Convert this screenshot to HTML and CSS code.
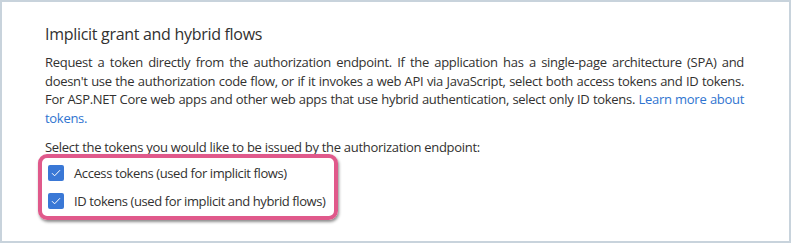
FILE: index.html
```html
<!doctype html>
<html>
<head>
<meta charset="utf-8">
<title>Implicit grant and hybrid flows</title>
<link rel="stylesheet" href="styles.css">
</head>
<body>
<div class="frame">
  <div class="section">
    <h3 class="title">Implicit grant and hybrid flows</h3>
    <p class="desc">Request a token directly from the authorization endpoint. If the application has a single-page architecture (SPA) and doesn't use the authorization code flow, or if it invokes a web API via JavaScript, select both access tokens and ID tokens. For ASP.NET Core web apps and other web apps that use hybrid authentication, select only ID tokens. <a href="#">Learn more about tokens.</a></p>
    <p class="ask">Select the tokens you would like to be issued by the authorization endpoint:</p>
    <div class="picks">
      <label class="pick"><span class="box"><svg width="10" height="8" viewBox="0 0 10 8"><path d="M1 4.2l2.6 2.6L9 1.2" fill="none" stroke="#fff" stroke-width="1"/></svg></span>Access tokens (used for implicit flows)</label>
      <label class="pick"><span class="box"><svg width="10" height="8" viewBox="0 0 10 8"><path d="M1 4.2l2.6 2.6L9 1.2" fill="none" stroke="#fff" stroke-width="1"/></svg></span>ID tokens (used for implicit and hybrid flows)</label>
    </div>
  </div>
</div>
</body>
</html>
```

FILE: styles.css
```css
*{margin:0;padding:0;box-sizing:border-box}
html,body{width:791px;height:243px;background:#fff}
body{font-family:"Segoe UI","Open Sans","Liberation Sans",sans-serif;color:#323130;overflow:hidden;letter-spacing:-0.3px}
.frame{width:791px;height:243px;border:2px solid #c8d3dc;background:#fff}
.section{padding:21px 45px 0 43px}
.title{font-size:16px;font-weight:400;line-height:22px;margin-bottom:8px}
.desc{font-size:13px;line-height:18.5px;text-align:justify}
.desc a{color:#2f74d0;text-decoration:none}
.ask{font-size:13px;line-height:18px;margin-top:11px}
.picks{display:inline-flex;flex-direction:column;gap:10px;margin:-2px 0 0 -7px;padding:6px 8px 6px 6px;border:4px solid #e0598b;border-radius:9px;box-shadow:1px 2px 3px rgba(0,0,0,.45)}
.pick{display:flex;align-items:center;gap:10px;font-size:13px;line-height:18px;letter-spacing:-0.4px}
.box{width:16px;height:16px;background:#3a78d6;border-radius:2px;display:flex;align-items:center;justify-content:center}
```
